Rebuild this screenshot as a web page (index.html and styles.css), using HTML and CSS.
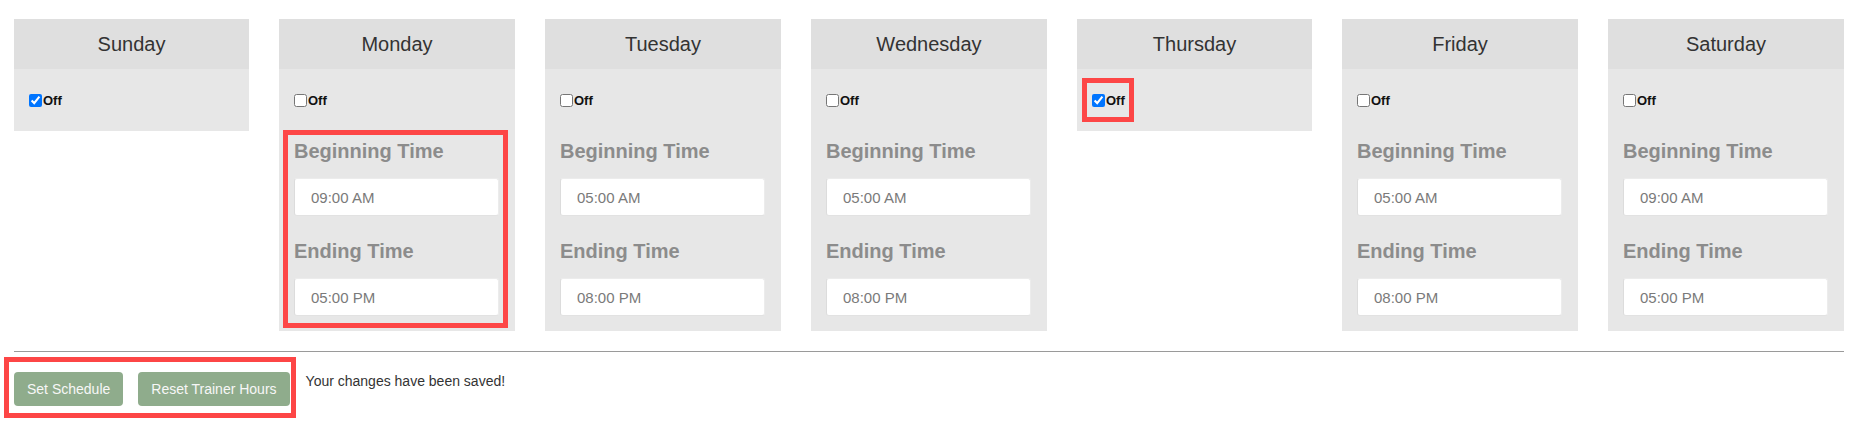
FILE: index.html
```html
<!DOCTYPE html>
<html lang="en">
<head>
<meta charset="utf-8">
<title>Trainer Schedule</title>
<link rel="stylesheet" href="styles.css">
</head>
<body>
<div class="page">
  <div class="week">
    <section class="day">
      <div class="day-head">Sunday</div>
      <div class="day-body">
        <label class="off"><input type="checkbox" checked>Off</label>
      </div>
    </section>

    <section class="day">
      <div class="day-head">Monday</div>
      <div class="day-body">
        <label class="off"><input type="checkbox">Off</label>
        <div class="field-label">Beginning Time</div>
        <input class="time" type="text" value="09:00 AM" readonly>
        <div class="field-label">Ending Time</div>
        <input class="time" type="text" value="05:00 PM" readonly>
      </div>
      <div class="mark mark-monday"></div>
    </section>

    <section class="day">
      <div class="day-head">Tuesday</div>
      <div class="day-body">
        <label class="off"><input type="checkbox">Off</label>
        <div class="field-label">Beginning Time</div>
        <input class="time" type="text" value="05:00 AM" readonly>
        <div class="field-label">Ending Time</div>
        <input class="time" type="text" value="08:00 PM" readonly>
      </div>
    </section>

    <section class="day">
      <div class="day-head">Wednesday</div>
      <div class="day-body">
        <label class="off"><input type="checkbox">Off</label>
        <div class="field-label">Beginning Time</div>
        <input class="time" type="text" value="05:00 AM" readonly>
        <div class="field-label">Ending Time</div>
        <input class="time" type="text" value="08:00 PM" readonly>
      </div>
    </section>

    <section class="day">
      <div class="day-head">Thursday</div>
      <div class="day-body">
        <label class="off"><input type="checkbox" checked>Off</label>
      </div>
      <div class="mark mark-thursday"></div>
    </section>

    <section class="day">
      <div class="day-head">Friday</div>
      <div class="day-body">
        <label class="off"><input type="checkbox">Off</label>
        <div class="field-label">Beginning Time</div>
        <input class="time" type="text" value="05:00 AM" readonly>
        <div class="field-label">Ending Time</div>
        <input class="time" type="text" value="08:00 PM" readonly>
      </div>
    </section>

    <section class="day">
      <div class="day-head">Saturday</div>
      <div class="day-body">
        <label class="off"><input type="checkbox">Off</label>
        <div class="field-label">Beginning Time</div>
        <input class="time" type="text" value="09:00 AM" readonly>
        <div class="field-label">Ending Time</div>
        <input class="time" type="text" value="05:00 PM" readonly>
      </div>
    </section>
  </div>

  <hr class="divider">

  <div class="actions">
    <button class="btn" type="button">Set Schedule</button>
    <button class="btn" type="button">Reset Trainer Hours</button>
    <span class="msg">Your changes have been saved!</span>
    <div class="mark mark-actions"></div>
  </div>
</div>
</body>
</html>
```

FILE: styles.css
```css
html, body {
  margin: 0;
  padding: 0;
  background: #ffffff;
}

body {
  font-family: "Liberation Sans", Arial, sans-serif;
  color: #333333;
  min-height: 434px;
}

.page {
  padding: 19px 15px 28px 14px;
}

.week {
  display: grid;
  grid-template-columns: repeat(7, 1fr);
  column-gap: 30px;
  align-items: start;
}

.day {
  position: relative;
}

.day-head {
  height: 50px;
  background: #dfdfdf;
  display: flex;
  align-items: center;
  justify-content: center;
  font-size: 20px;
  color: #333333;
}

.day-body {
  background: #e7e7e7;
  padding: 15px 16px 15px 15px;
  display: flex;
  flex-direction: column;
}

.off {
  display: flex;
  align-items: center;
  height: 32px;
  font-size: 13px;
  font-weight: bold;
  color: #111111;
}

.off input {
  margin: 0 1px 0 0;
  width: 13px;
  height: 13px;
}

.field-label {
  margin-top: 23px;
  margin-bottom: 15px;
  font-size: 20px;
  line-height: 24px;
  font-weight: bold;
  color: #8c8c8c;
}

.time {
  box-sizing: border-box;
  width: 205px;
  height: 38px;
  margin: 0;
  padding: 0 0 0 16px;
  border: 1px solid #ececec;
  border-left-color: #dcdcdc;
  border-bottom-color: #e2e2e2;
  border-radius: 3px;
  background: #ffffff;
  font-family: "Liberation Sans", Arial, sans-serif;
  font-size: 15px;
  color: #7a7a7a;
  outline: none;
}

.divider {
  border: none;
  border-top: 1px solid #9a9a9a;
  height: 0;
  margin: 20px 0 0 0;
}

.actions {
  position: relative;
  display: flex;
  align-items: flex-start;
  gap: 15px;
  margin-top: 20px;
}

.btn {
  height: 34px;
  padding: 0 13px;
  border: none;
  border-radius: 4px;
  background: #8fac8c;
  color: #f7f7f7;
  font-family: "Liberation Sans", Arial, sans-serif;
  font-size: 14px;
}

.msg {
  margin-left: 1px;
  margin-top: 1px;
  font-size: 14px;
  line-height: 16px;
  color: #333333;
}

.mark {
  position: absolute;
  box-sizing: border-box;
  border: 5px solid #fd4646;
  pointer-events: none;
}

.mark-monday {
  left: 4px;
  top: 111px;
  width: 225px;
  height: 198px;
}

.mark-thursday {
  left: 5px;
  top: 59px;
  width: 52px;
  height: 44px;
}

.mark-actions {
  left: -10px;
  top: -15px;
  width: 292px;
  height: 61px;
}
```
